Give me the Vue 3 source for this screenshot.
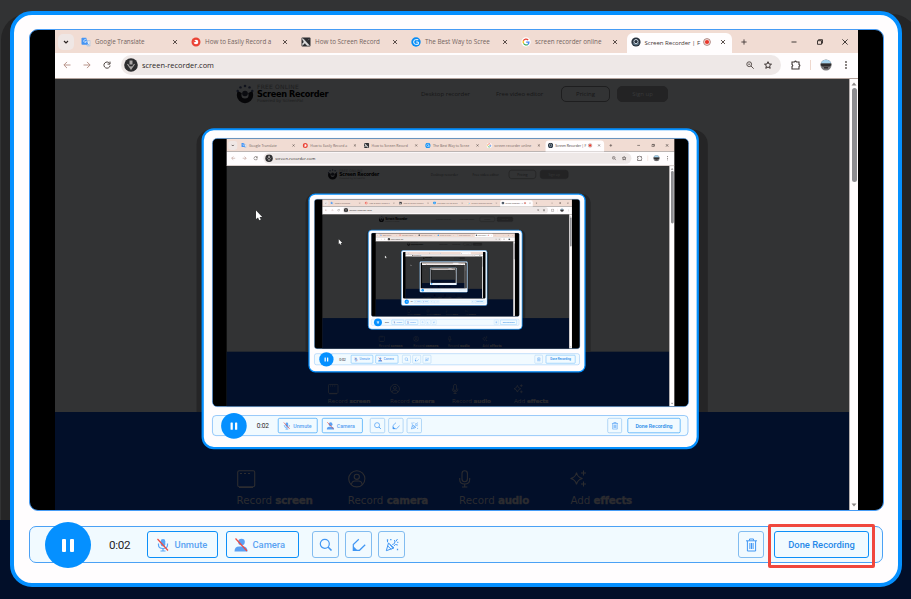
<script setup>
defineOptions({ name: 'App' })

const props = defineProps({ depth: { type: Number, default: 0 } })

const MAX_DEPTH = 6

const tabs = [
  { title: 'Google Translate', icon: 'translate' },
  { title: 'How to Easily Record a', icon: 'red' },
  { title: 'How to Screen Record', icon: 'dark' },
  { title: 'The Best Way to Scree', icon: 'blue' },
  { title: 'screen recorder online', icon: 'google' },
]

const features = [
  { verb: 'Record', noun: 'screen', icon: 'screen' },
  { verb: 'Record', noun: 'camera', icon: 'camera' },
  { verb: 'Record', noun: 'audio', icon: 'audio' },
  { verb: 'Add', noun: 'effects', icon: 'effects' },
]
</script>

<template>
  <div class="stage" :class="props.depth ? 'stage-nested' : 'stage-root'">
    <div class="shade"></div>

    <div class="panel">
      <div class="screen">
        <div class="browser">
          <div class="tabbar">
            <span class="tab-menu">
              <svg width="6" height="6" viewBox="0 0 6 6"><path d="M1 2l2 2 2-2" fill="none" stroke="#2b2423" stroke-width="1.2" /></svg>
            </span>
            <div v-for="tab in tabs" :key="tab.title" class="tab">
              <svg class="fav" viewBox="0 0 10 10">
                <template v-if="tab.icon === 'translate'">
                  <path d="M3.500 3h5.300q.7 0 .7.7v5.100q0 .7-.7.7H6z" fill="#bccbe0" />
                  <path d="M1.200.7h4l2.300 7H1.200q-.7 0-.7-.7V1.400q0-.7.7-.7z" fill="#4594f3" />
                  <path d="M5.400 3a1.500 1.500 0 1 0 .2 1.600H4M6.500 5h2.500M7.800 4.500c0 1.500-.5 2.500-1.300 3M7 5.500l1.800 2" fill="none" stroke="#fff" stroke-width=".6" />
                </template>
                <template v-else-if="tab.icon === 'red'">
                  <circle cx="5" cy="5" r="3.400" fill="#fff" stroke="#ea4335" stroke-width="2.200" />
                  <path d="M1 1.500l4 3-1.500 1z" fill="#ea4335" />
                </template>
                <template v-else-if="tab.icon === 'dark'">
                  <rect x=".5" y=".5" width="9" height="9" rx="1" fill="#2d2d30" />
                  <path d="M1 1.500L2.500 2l6 6.500H6L3.800 6 1.500 8.500V6.500L3 5zM8.500 1.800L7 3.300" fill="#ddd" stroke="#ddd" stroke-width=".4" />
                </template>
                <template v-else-if="tab.icon === 'blue'">
                  <circle cx="5" cy="5" r="4.700" fill="#078cf5" />
                  <path d="M7.300 2.700H4.500Q2.700 2.700 2.700 5t1.800 2.300h2.800V5H5.200" fill="none" stroke="#fff" stroke-width="1" />
                </template>
                <template v-else>
                  <circle cx="5" cy="5" r="4.700" fill="#fff" />
                  <path d="M7.200 3A3 3 0 0 0 2.300 3.800" fill="none" stroke="#ea4335" stroke-width="1.200" />
                  <path d="M2.300 3.800a3 3 0 0 0 .3 2.700" fill="none" stroke="#fbbc05" stroke-width="1.200" />
                  <path d="M2.600 6.500a3 3 0 0 0 4.200 1" fill="none" stroke="#34a853" stroke-width="1.200" />
                  <path d="M6.800 7.500Q8 6.700 8 5.100H5.200" fill="none" stroke="#4285f4" stroke-width="1.200" />
                </template>
              </svg>
              <span class="tab-title">{{ tab.title }}</span>
              <svg class="x" viewBox="0 0 6 6"><path d="M1 1l4 4M5 1L1 5" /></svg>
            </div>
            <div class="tab tab-active">
              <svg class="fav" viewBox="0 0 10 10">
                <circle cx="5" cy="5" r="4.600" fill="#27313c" />
                <circle cx="5" cy="4.600" r="2.100" fill="#27313c" stroke="#dbe7f2" stroke-width=".9" />
                <path d="M1.800 6.500Q5 9.500 8.200 6.500" fill="none" stroke="#8aa9c2" stroke-width=".7" />
              </svg>
              <span class="tab-title">Screen Recorder | F</span>
              <svg class="rec" viewBox="0 0 8 8"><circle cx="4" cy="4" r="3.400" fill="#fbe4e0" stroke="#9a6d68" stroke-width=".8" /><circle cx="4" cy="4" r="2.100" fill="#e8372c" /></svg>
              <svg class="x" viewBox="0 0 6 6"><path d="M1 1l4 4M5 1L1 5" /></svg>
            </div>
            <svg class="plus" viewBox="0 0 6 6"><path d="M3 .4v5.200M.4 3h5.200" stroke="#433936" stroke-width=".9" /></svg>
            <div class="window-buttons">
              <svg viewBox="0 0 6 6"><path d="M.5 3h5" /></svg>
              <svg viewBox="0 0 6 6"><path d="M.5 1.700h4v3.600h-4zM1.500 1.500V.7h4v3.500h-.8" /></svg>
              <svg viewBox="0 0 6 6"><path d="M.4.4l5.200 5.200M5.600.4L.4 5.600" /></svg>
            </div>
          </div>

          <div class="navbar">
            <div class="history">
              <svg viewBox="0 0 8 8"><path d="M7.500 4H.9M4 .9L.9 4 4 7.100" stroke="#b8958b" /></svg>
              <svg viewBox="0 0 8 8"><path d="M.5 4h6.600M4 .9L7.100 4 4 7.100" stroke="#b8958b" /></svg>
              <svg viewBox="0 0 8 8"><path d="M6.700 2.500A3.100 3.100 0 1 0 7.100 4.600M7 .6v2.500H4.500" stroke="#4d4441" /></svg>
            </div>
            <div class="address">
              <svg class="site" viewBox="0 0 14 14">
                <circle cx="7" cy="7" r="6.800" fill="#2d2d2f" />
                <path d="M5.500 2.500h3v4h-3z" fill="#aaa6a5" />
                <path d="M3.500 6l3.500 5 3.500-5M7 8v3.500" fill="none" stroke="#aaa6a5" stroke-width="1.200" />
              </svg>
              <span class="url">screen-recorder.com</span>
              <svg class="zoomer" viewBox="0 0 8 8"><circle cx="3.200" cy="3.200" r="2.400" /><path d="M5 5l2.700 2.700M2.200 3.200h2" /></svg>
              <svg class="star" viewBox="0 0 8 8"><path d="M4 .7l1 2.300 2.500.2-1.900 1.600.6 2.500L4 6 1.800 7.300l.6-2.500L.5 3.200 3 3z" /></svg>
            </div>
            <svg class="puzzle" viewBox="0 0 10 10"><path d="M1 2h2.500Q4.500.2 5.500 2H8v2.500q1.800 1 0 2V9H1V6.500q1.600-1 0-2z" /></svg>
            <span class="divider"></span>
            <svg class="avatar" viewBox="0 0 12 12">
              <circle cx="6" cy="6" r="5.500" fill="#787779" />
              <path d="M.8 4.500a5.500 5.500 0 0 1 10.400 0z" fill="#a4d1ec" />
              <path d="M.7 4.500h10.600v1.700L9.500 7.500h-7L.7 6.200z" fill="#2e2c2d" />
              <path d="M4 8h4v1.500H4z" fill="#353234" />
            </svg>
            <svg class="more" viewBox="0 0 2 8"><circle cx="1" cy="1" r=".9" /><circle cx="1" cy="4" r=".9" /><circle cx="1" cy="7" r=".9" /></svg>
          </div>

          <div class="view">
            <div class="site-page">
              <div class="site-top">
                <svg class="logo" viewBox="0 0 18 20">
                  <circle cx="9" cy="11" r="5.900" fill="none" stroke="#060608" stroke-width="4.600" />
                  <path d="M1 6.500L5.500 9 9 10.500 12.500 9 17 6.500 14.500 2h-11z" fill="#323334" />
                  <circle cx="9" cy="9.500" r="2.800" fill="#0b0c10" />
                  <g fill="#10131d"><circle cx="9" cy="2" r="1.300" /><circle cx="4.500" cy="3.400" r="1.200" /><circle cx="13.500" cy="3.400" r="1.200" /><circle cx="1.700" cy="7" r="1.200" /><circle cx="16.300" cy="7" r="1.200" /></g>
                </svg>
                <div class="brand">
                  <span class="brand-kicker">FREE ONLINE</span>
                  <span class="brand-name">Screen Recorder</span>
                  <span class="brand-sub">Powered by ScreenPal</span>
                </div>
                <span class="site-link link-desktop">Desktop recorder</span>
                <span class="site-link">Free video editor</span>
                <span class="pill">Pricing</span>
                <span class="pill pill-solid">Sign up</span>
              </div>
              <div class="site-bottom">
                <div v-for="f in features" :key="f.noun" class="feature">
                  <svg viewBox="0 0 18 18">
                    <template v-if="f.icon === 'screen'">
                      <rect x=".7" y=".7" width="17" height="16" rx="1.500" /><path d="M3 3.500h2M7 3.500h2M11 3.500h2M2 17.500h14" />
                    </template>
                    <template v-else-if="f.icon === 'camera'">
                      <circle cx="8.800" cy="8.800" r="8.100" /><circle cx="8.800" cy="6.800" r="2.600" /><path d="M3.300 14.800q.6-3.800 3.700-3.800h3.600q3.100 0 3.700 3.800" />
                    </template>
                    <template v-else-if="f.icon === 'audio'">
                      <rect x="3" y=".7" width="5.400" height="11" rx="2.700" /><path d="M.7 8v1.500q0 4.500 5 4.500t5-4.500V8M5.700 14v3M3 17h5.400" />
                    </template>
                    <template v-else>
                      <path d="M6.500 2.500q1 5 6 6-5 1-6 6-1-5-6-6 5-1 6-6zM13.500.5v5M11 3h5M13.500 11.500v5M11 14h5" />
                    </template>
                  </svg>
                  <span class="feature-text">{{ f.verb }} <b>{{ f.noun }}</b></span>
                </div>
              </div>
            </div>
            <div class="scrollbar">
              <svg viewBox="0 0 6 4"><path d="M3 .5L5.500 3.500H.5z" /></svg>
              <span class="thumb"></span>
              <svg class="down" viewBox="0 0 6 4"><path d="M3 3.500L.5.5h5z" /></svg>
            </div>
          </div>
        </div>

        <App v-if="props.depth < MAX_DEPTH" :depth="props.depth + 1" />

        <svg class="cursor" viewBox="0 0 8 11"><path d="M1 .5v8.600l2-1.700 1.300 2.900 1.500-.7L4.600 6.900h2.600z" fill="#fff" /></svg>
      </div>

      <div class="controls">
        <span class="pause"><i></i><i></i></span>
        <span class="time">0:02</span>
        <span class="btn unmute">
          <svg width="14" height="16" viewBox="0 0 14 16">
            <rect x="4.700" y="2" width="4.600" height="7.500" rx="2.300" fill="#5aa6f6" />
            <path d="M2.500 6.500v1.500q0 3.500 4.500 3.500t4.500-3.500V6.500M7 11.500V14M4.500 14h5" fill="none" stroke="#5aa6f6" stroke-width="1.200" />
            <path d="M1.500 2l10.500 11.500" stroke="#ef4a41" stroke-width="1.200" />
          </svg>
          Unmute
        </span>
        <span class="btn camera">
          <svg width="14" height="16" viewBox="0 0 14 16">
            <circle cx="7.500" cy="5" r="3.300" fill="#5aa0f3" />
            <path d="M.5 14.500q0-5 4.500-5h4q4.500 0 4.500 5z" fill="#5aa0f3" />
            <path d="M1.500 1.500l11.500 12.500" stroke="#ef4a41" stroke-width="1.200" />
          </svg>
          Camera
        </span>
        <span class="btn icon-btn search">
          <svg width="14" height="14" viewBox="0 0 14 14"><circle cx="5.800" cy="5.800" r="4.500" stroke-width="1.200" /><path d="M9 9l3.500 3.500" stroke-width="1.600" /></svg>
        </span>
        <span class="btn icon-btn">
          <svg width="14" height="14" viewBox="0 0 14 14"><path d="M6.800 1.300L1.300 6.500v5.800h6.200l5.700-5.500" stroke-width="1.200" /><path d="M1 7.800l4.800 5H1z" fill="#4197f4" stroke="none" /></svg>
        </span>
        <span class="btn icon-btn">
          <svg width="14" height="14" viewBox="0 0 14 14"><path d="M3.500 5L1.300 12.700 9 10zM2.800 8l3.500 3.400M4.800 6.500l3 3.500M7.300 6.500q3.500-.5 2.200-4.500M8.800 8q1.500-2.500 4-1M12.500 1l-1.700 2.500" /><path d="M2.500 1.200v1.500M5.800 1v1.300M12.500 10.800v1.500M12.300 4.300h1M2 3.500h1" stroke-width="1.300" /></svg>
        </span>
        <span class="btn icon-btn trash">
          <svg width="13" height="14" viewBox="0 0 13 14"><path d="M1 2.800h11M4.500 2.500V1h4v1.500M2.400 3v10h8.200V3M4.900 5v6M6.500 5v6M8.100 5v6" /></svg>
        </span>
        <span class="btn done">Done Recording</span>
      </div>
    </div>

    <div v-if="!props.depth" class="highlight"></div>
  </div>
</template>

<style>
body {
  margin: 0;
  overflow: hidden;
}
</style>

<style scoped>
.stage {
  box-sizing: border-box;
  width: 911px;
  height: 599px;
  padding: 11px 0 0 10px;
  font-family: Roboto, "Liberation Sans", sans-serif;
}
.stage *,
.stage *::before {
  box-sizing: border-box;
}
.stage-root {
  position: relative;
  overflow: hidden;
  background: linear-gradient(#323334 520px, #020f29 520px);
}
.stage-nested {
  position: absolute;
  left: 166.300px;
  top: 92.100px;
  transform: scale(0.5575);
  transform-origin: 0 0;
}
.stage svg {
  display: block;
  flex: none;
}
.shade {
  position: absolute;
  left: 1px;
  top: 14px;
  width: 917px;
  height: 506px;
  border-radius: 26px 26px 0 0;
  background: #252526;
}
.panel {
  position: relative;
  width: 892px;
  height: 576px;
  padding: 14px 14px 0 15px;
  border: 4px solid #0590ff;
  border-radius: 22px;
  background: #fffdfe;
}
.screen {
  position: relative;
  width: 855px;
  height: 482px;
  padding: 0 25px;
  border: 1px solid #469cf5;
  border-radius: 9px;
  background: #000;
  overflow: hidden;
}
.browser {
  display: flex;
  flex-direction: column;
  width: 803px;
  height: 480px;
  font-family: "Open Sans", "Noto Sans", sans-serif;
}

/* tab strip */
.tabbar {
  display: flex;
  align-items: center;
  height: 23px;
  padding-left: 3px;
  background: #f1dcd3;
  font-size: 6.300px;
  color: #73645f;
}
.tab-menu {
  display: grid;
  place-items: center;
  width: 16px;
  height: 16px;
  margin-right: 3px;
  border-radius: 5px;
  background: #efe7e5;
}
.tab {
  display: flex;
  align-items: center;
  width: 110px;
  height: 20px;
  padding: 0 9px 0 4px;
}
.fav {
  width: 10px;
  height: 10px;
}
.tab-title {
  flex: 1;
  margin-left: 4px;
  white-space: nowrap;
}
.x {
  width: 6px;
  height: 6px;
  fill: none;
  stroke: #493e3b;
  stroke-width: 0.9;
}
.tab-active {
  align-self: flex-end;
  width: 105px;
  padding: 0 6px 2px 4px;
  border-radius: 6px 6px 0 0;
  background: #fffdfe;
  color: #3f3634;
}
.tab-active .tab-title {
  margin-left: 3.500px;
  font-size: 6.100px;
  letter-spacing: -0.05px;
}
.rec {
  width: 8px;
  height: 8px;
  margin-right: 9px;
}
.plus {
  width: 6px;
  height: 6px;
  margin-left: 8.500px;
}
.window-buttons {
  display: flex;
  gap: 19.500px;
  margin-left: auto;
  padding-right: 10px;
}
.window-buttons svg {
  width: 6px;
  height: 6px;
  fill: none;
  stroke: #2f2826;
  stroke-width: 0.9;
}

/* address row */
.navbar {
  display: flex;
  align-items: center;
  height: 26px;
  padding: 0 10px 1px 8px;
  border-bottom: 1px solid #b2a29c;
  background: #fffdfe;
}
.history {
  display: flex;
  gap: 12px;
}
.history svg {
  width: 8px;
  height: 8px;
  fill: none;
}
.address {
  display: flex;
  align-items: center;
  width: 660px;
  height: 20px;
  margin-left: 10px;
  padding: 0 9px 0 3px;
  border-radius: 10px;
  background: #eee8e7;
}
.site {
  width: 14px;
  height: 14px;
}
.url {
  flex: 1;
  margin-left: 4px;
  font-size: 7.400px;
  color: #2b2625;
}
.zoomer,
.star {
  width: 8px;
  height: 8px;
  fill: none;
  stroke: #5b524f;
  stroke-width: 1;
}
.star {
  margin-left: 10px;
  stroke: #38302e;
}
.puzzle {
  width: 10px;
  height: 10px;
  margin-left: 10px;
  fill: none;
  stroke: #3f3735;
  stroke-width: 1.100;
}
.divider {
  width: 1px;
  height: 10px;
  margin-left: 9px;
  background: #efd8ce;
}
.avatar {
  width: 12px;
  height: 12px;
  margin-left: 9px;
}
.more {
  width: 2px;
  height: 8px;
  margin-left: auto;
  margin-right: 1px;
  fill: #544b48;
}

/* website */
.view {
  display: flex;
  height: 431px;
}
.site-page {
  display: flex;
  flex-direction: column;
  width: 794px;
  background: #323334;
}
.site-top {
  display: flex;
  align-items: center;
  height: 30px;
  margin-bottom: auto;
  padding-left: 181px;
  font-size: 6px;
  color: #161617;
}
.logo {
  width: 18px;
  height: 20px;
}
.brand {
  display: flex;
  flex-direction: column;
  width: 164px;
  margin-left: 3px;
  font-family: "DejaVu Sans", sans-serif;
  white-space: nowrap;
}
.brand-kicker {
  font-size: 6px;
  line-height: 6px;
  letter-spacing: 0.2px;
  color: #1d1d1e;
}
.brand-name {
  font-size: 8.200px;
  line-height: 8px;
  font-weight: 700;
  letter-spacing: -0.35px;
  color: #000;
}
.brand-sub {
  font-size: 4.200px;
  line-height: 6px;
  color: #1d1d1e;
}
.site-link {
  width: 65px;
  white-space: nowrap;
}
.link-desktop {
  width: 75px;
}
.pill {
  display: grid;
  place-items: center;
  width: 49px;
  height: 16px;
  margin-right: 7px;
  border: 1px solid #1e1e1f;
  border-radius: 5px;
}
.pill-solid {
  width: 51px;
  border-color: #232324;
  background: #232324;
  color: #38393a;
}
.site-bottom {
  display: grid;
  grid-template-columns: repeat(4, 111.300px);
  align-content: start;
  height: 98.500px;
  padding: 58px 0 0 181.500px;
  background: #020f29;
}
.feature svg {
  width: 18px;
  height: 18px;
  overflow: visible;
  fill: none;
  stroke: #2c2c30;
  stroke-width: 1.100;
}
.feature-text {
  display: block;
  margin-top: 5px;
  font-family: "DejaVu Sans", sans-serif;
  font-size: 10.300px;
  line-height: 15px;
  white-space: nowrap;
  color: #2c2c30;
}
.feature-text b {
  letter-spacing: -0.25px;
  -webkit-text-stroke: 0.4px #2c2c30;
}
.scrollbar {
  display: flex;
  flex-direction: column;
  align-items: center;
  width: 9px;
  padding: 3px 0;
  border-left: 1px solid #b4aeae;
  background: #fffdfe;
}
.scrollbar svg {
  width: 6px;
  height: 4px;
  fill: #8c8888;
}
.thumb {
  width: 5px;
  height: 94px;
  margin-top: 2px;
  border-radius: 3px;
  background: #8d8d91;
}
.scrollbar .down {
  margin-top: auto;
}
.cursor {
  position: absolute;
  left: 225px;
  top: 180px;
  width: 8px;
  height: 11px;
}

/* recording controls */
.controls {
  display: flex;
  align-items: center;
  width: 854px;
  height: 37px;
  margin-top: 15px;
  padding: 0 13px 0 15px;
  border: 1px solid #4ba1f5;
  border-radius: 7px;
  background: #f1faff;
}
.pause {
  display: flex;
  flex: none;
  align-items: center;
  justify-content: center;
  gap: 4px;
  width: 46px;
  height: 46px;
  margin-top: 1px;
  padding-right: 1px;
  border-radius: 50%;
  background: #0590ff;
}
.pause i {
  width: 4px;
  height: 13px;
  border-radius: 1px;
  background: #fff;
}
.time {
  width: 38px;
  margin-left: 18px;
  font-size: 11.700px;
  letter-spacing: -0.3px;
  color: #1f2327;
}
.btn {
  display: flex;
  align-items: center;
  height: 27px;
  border: 1px solid #0d8ff8;
  border-radius: 3px;
  font-size: 9.400px;
  font-weight: 500;
  color: #5aa2f2;
  white-space: nowrap;
}
.btn svg {
  margin-right: 4.500px;
}
.unmute {
  width: 71px;
  padding-left: 8px;
}
.camera {
  width: 73px;
  margin-left: 8px;
  padding-left: 7px;
}
.icon-btn {
  justify-content: center;
  width: 27px;
  margin-left: 6px;
  border-color: #82bcf0;
}
.icon-btn svg {
  margin: 0;
  fill: none;
  stroke: #4197f4;
  stroke-width: 1;
}
.search {
  margin-left: 13px;
}
.trash {
  width: 26px;
  margin-left: auto;
}
.done {
  justify-content: center;
  width: 95px;
  margin-left: 10px;
  color: #2588e8;
}
.highlight {
  position: absolute;
  left: 768px;
  top: 524px;
  width: 107px;
  height: 44px;
  border: 3px solid #f0473d;
  border-radius: 2px;
}
</style>
